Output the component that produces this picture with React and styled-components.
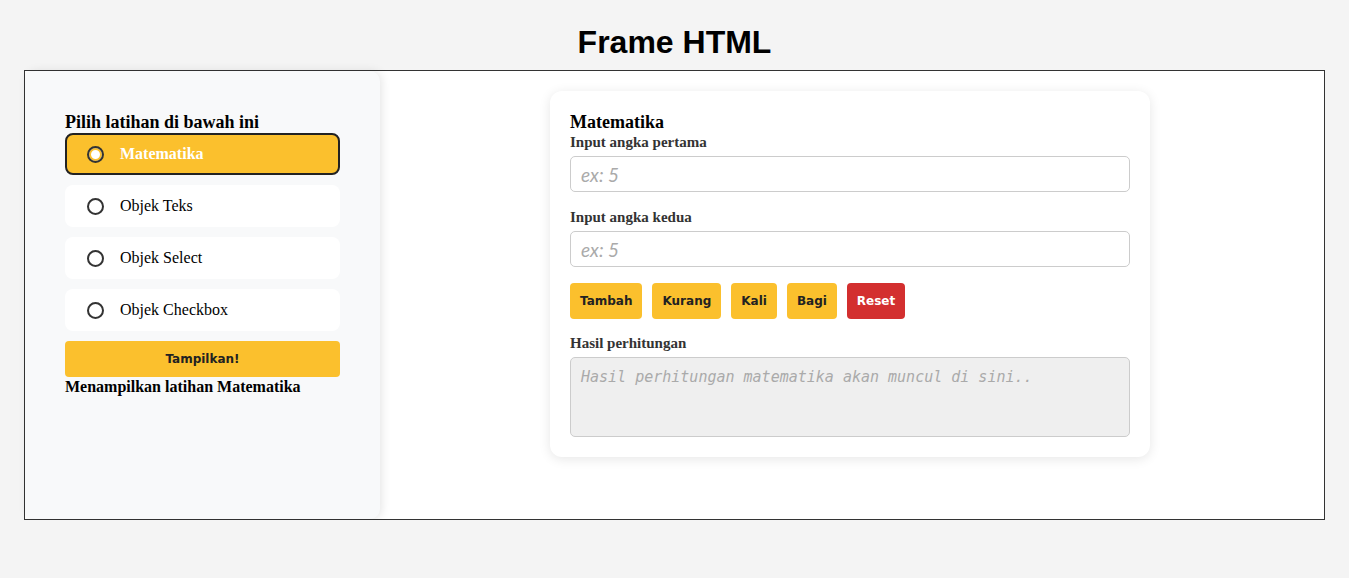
import { createGlobalStyle } from "styled-components";
import styled from "styled-components";

const options = ["Matematika", "Objek Teks", "Objek Select", "Objek Checkbox"];
const ops = ["Tambah", "Kurang", "Kali", "Bagi"];

const App = () => {
  const selected = "Matematika";

  return (
    <>
      <GlobalStyle />
      <Page>
        <Title>Frame HTML</Title>
        <Frame>
          <Sidebar>
            <SideHeading>Pilih latihan di bawah ini</SideHeading>
            <OptionList>
              {options.map((opt) => (
                <Option key={opt} $active={opt === selected}>
                  <Radio $active={opt === selected} />
                  {opt}
                </Option>
              ))}
            </OptionList>
            <ShowButton>Tampilkan!</ShowButton>
            <Status>Menampilkan latihan {selected}</Status>
          </Sidebar>

          <Main>
            <Card>
              <CardTitle>Matematika</CardTitle>
              <Field>
                <Label htmlFor="a">Input angka pertama</Label>
                <Input id="a" type="text" placeholder="ex: 5" />
              </Field>
              <Field>
                <Label htmlFor="b">Input angka kedua</Label>
                <Input id="b" type="text" placeholder="ex: 5" />
              </Field>
              <ButtonRow>
                {ops.map((op) => (
                  <OpButton key={op}>{op}</OpButton>
                ))}
                <OpButton $danger>Reset</OpButton>
              </ButtonRow>
              <Field>
                <Label htmlFor="hasil">Hasil perhitungan</Label>
                <Result
                  id="hasil"
                  readOnly
                  placeholder="Hasil perhitungan matematika akan muncul di sini.."
                />
              </Field>
            </Card>
          </Main>
        </Frame>
      </Page>
    </>
  );
};

export default App;

const GlobalStyle = createGlobalStyle`
  * {
    box-sizing: border-box;
  }
  body {
    margin: 0;
    background: #f4f4f4;
    font-family: "Liberation Serif", "Times New Roman", serif;
    color: #000;
  }
`;

const Page = styled.div`
  padding: 0 24px;
`;

const Title = styled.h1`
  margin: 24px 0 9px;
  font-family: "Liberation Sans", Arial, sans-serif;
  font-size: 32px;
  line-height: 37px;
  text-align: center;
`;

const Frame = styled.div`
  display: flex;
  height: 450px;
  border: 1px solid #333;
  background: #fff;
`;

const Sidebar = styled.aside`
  width: 355px;
  flex-shrink: 0;
  display: flex;
  flex-direction: column;
  padding: 40px;
  background: #f8f9fa;
  border-radius: 10px;
  box-shadow: 2px 0 10px rgba(0, 0, 0, 0.1);
`;

const SideHeading = styled.h3`
  margin: 0;
  font-size: 18px;
  line-height: 22px;
`;

const OptionList = styled.div`
  display: flex;
  flex-direction: column;
  gap: 10px;
`;

const Option = styled.label`
  display: flex;
  align-items: center;
  gap: 16px;
  height: 42px;
  padding: 0 20px;
  border-radius: 8px;
  border: 2px solid ${(p) => (p.$active ? "#222" : "transparent")};
  background: ${(p) => (p.$active ? "#fbc02d" : "#fff")};
  color: ${(p) => (p.$active ? "#fff" : "#000")};
  font-size: 16px;
  font-weight: ${(p) => (p.$active ? 700 : 400)};
  cursor: pointer;
`;

const Radio = styled.span`
  width: 17px;
  height: 17px;
  flex-shrink: 0;
  border-radius: 50%;
  border: 2px solid #333;
  background: ${(p) => (p.$active ? "#fff" : "transparent")};
  box-shadow: ${(p) => (p.$active ? "inset 0 0 0 2px #fbc02d" : "none")};
`;

const ShowButton = styled.button`
  margin-top: 10px;
  height: 36px;
  border: none;
  border-radius: 4px;
  background: #fbc02d;
  color: #222;
  font-family: "DejaVu Sans", Verdana, sans-serif;
  font-size: 12px;
  font-weight: 700;
  cursor: pointer;
`;

const Status = styled.p`
  margin: 1px 0 0;
  font-size: 16px;
  font-weight: 700;
  line-height: 18px;
`;

const Main = styled.main`
  flex: 1;
  display: flex;
  justify-content: center;
  align-items: flex-start;
  padding: 20px 20px 20px 16px;
`;

const Card = styled.section`
  width: 600px;
  padding: 20px;
  background: #fff;
  border-radius: 12px;
  box-shadow: 0 2px 12px rgba(0, 0, 0, 0.1);
`;

const CardTitle = styled.h3`
  margin: 0;
  font-size: 18px;
  line-height: 22px;
`;

const Field = styled.div`
  display: flex;
  flex-direction: column;
  gap: 5px;
  & + & {
    margin-top: 16px;
  }
`;

const Label = styled.label`
  font-size: 15px;
  font-weight: 700;
  line-height: 18px;
  color: #333;
`;

const Input = styled.input`
  height: 36px;
  padding: 0 10px;
  border: 1px solid #ccc;
  border-radius: 5px;
  font-family: Lato, "Open Sans", sans-serif;
  font-size: 19px;

  &::placeholder {
    color: #aaa;
    font-style: italic;
  }
`;

const ButtonRow = styled.div`
  display: flex;
  gap: 10px;
  margin: 16px 0 15px;
`;

const OpButton = styled.button`
  height: 36px;
  padding: 0 10px;
  border: none;
  border-radius: 4px;
  background: ${(p) => (p.$danger ? "#d32f2f" : "#fbc02d")};
  color: ${(p) => (p.$danger ? "#fff" : "#222")};
  font-family: "DejaVu Sans", Verdana, sans-serif;
  font-size: 12px;
  font-weight: 700;
  cursor: pointer;
`;

const Result = styled.textarea`
  height: 80px;
  padding: 10px;
  border: 1px solid #ccc;
  border-radius: 5px;
  background: #efefef;
  resize: none;
  font-family: "DejaVu Sans Mono", monospace;
  font-size: 15px;
  font-style: italic;

  &::placeholder {
    color: #aaa;
    font-style: italic;
  }
`;
